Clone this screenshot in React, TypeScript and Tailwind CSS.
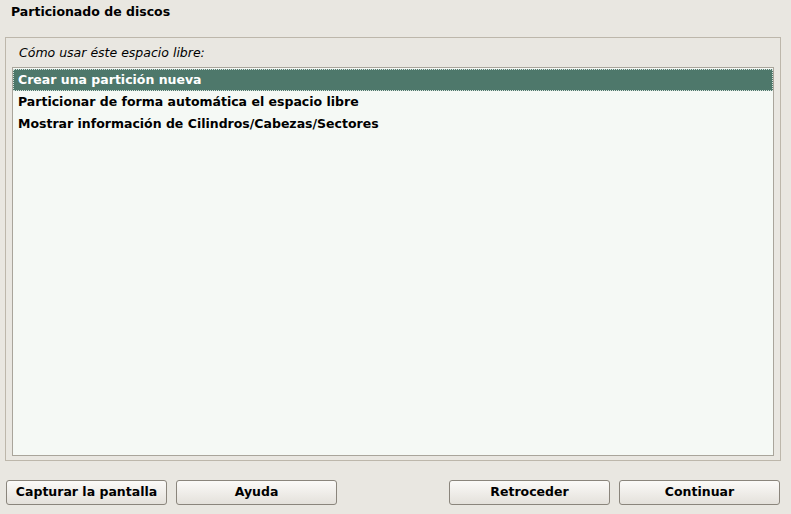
const font = { fontFamily: '"DejaVu Sans", Verdana, sans-serif' }

const options = [
  'Crear una partición nueva',
  'Particionar de forma automática el espacio libre',
  'Mostrar información de Cilindros/Cabezas/Sectores',
]

function Button({ label }: { label: string }) {
  return (
    <button className="h-[25px] w-[161px] rounded-[3px] border border-[#8a857c] bg-gradient-to-b from-[#fbfaf8] to-[#e4e1db] text-[12.5px] font-bold text-black leading-none">
      {label}
    </button>
  )
}

export default function App() {
  return (
    <div className="flex h-[514px] w-[791px] flex-col bg-[#e9e7e1] px-[5px] text-black" style={font}>
      {/* Title */}
      <div className="h-[37px] pl-[6px] pt-[4px] text-[12.5px] font-bold leading-[16px]">Particionado de discos</div>

      {/* Frame */}
      <div className="flex h-[424px] w-[776px] flex-col border border-[#bdb7ab] pb-[4px] pl-[6px] pr-[6px]">
        <div className="flex h-[29px] items-center pl-[7px] pt-[2px] text-[12.5px] italic leading-none">Cómo usar éste espacio libre:</div>
        <div className="flex-1 border border-[#a9a59b] bg-[#f5f9f5] pt-[1px]">
          {options.map((o, i) => (
            <div
              key={o}
              className={
                i === 0
                  ? 'flex h-[22px] items-center border border-dotted border-[#d8e2dd] bg-[#4e786b] pl-[4px] text-[12.5px] font-bold text-white'
                  : 'flex h-[22px] items-center pl-[5px] text-[12.5px] font-bold'
              }
            >
              {o}
            </div>
          ))}
        </div>
      </div>

      {/* Buttons */}
      <div className="mt-[19px] flex items-center pl-[1px]">
        <div className="flex gap-[9px]">
          <Button label="Capturar la pantalla" />
          <Button label="Ayuda" />
        </div>
        <div className="ml-auto flex gap-[9px] pr-[6px]">
          <Button label="Retroceder" />
          <Button label="Continuar" />
        </div>
      </div>
    </div>
  )
}
